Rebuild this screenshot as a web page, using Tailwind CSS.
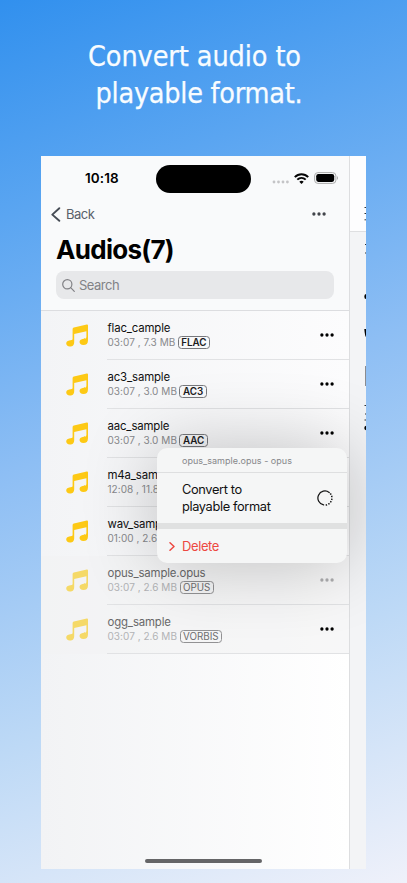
<!DOCTYPE html>
<html lang="en">
<head>
<meta charset="utf-8">
<meta name="viewport" content="width=device-width">
<title>Audios</title>
<script src="https://cdn.jsdelivr.net/npm/@tailwindcss/browser@4"></script>
</head>
<body class="h-[883px] w-[407px] overflow-hidden bg-[linear-gradient(160deg,#3190ee_0%,#5aa5f1_21%,#8dbef4_46%,#bdd9f6_73%,#eff1fa_100%)] font-['Inter',sans-serif]">
<svg class="hidden">
  <symbol id="note" viewBox="0 0 22 23"><path d="M6.6 5.3Q6.6 3.9 7.9 3.6L20.8.5Q22 .3 22 1.5V16.2C22 19.6 20.4 21 17.4 21C12.4 21 12.4 15.6 16.6 15C18.4 14.8 20.4 14.9 20.4 13V7.3L8.2 10V17.8C8.2 21.4 6.7 22.5 4 22.5C-.9 22.5-.9 17.1 3.2 16.5C5.2 16.2 6.6 16.4 6.6 14.8Z" fill="currentColor"/></symbol>
  <symbol id="dots" viewBox="0 0 14 4"><circle cx="1.9" cy="2" r="1.65"/><circle cx="7" cy="2" r="1.65"/><circle cx="12.1" cy="2" r="1.65"/></symbol>
</svg>
<h1 class="h-[156px] pt-[38px] text-center font-['DejaVu_Sans_Condensed','DejaVu_Sans',sans-serif] text-[28.5px] leading-[37px] font-normal tracking-[-0.1px] text-[#f8fcff] [-webkit-text-stroke:0.25px_#f8fcff]"><span class="block pr-[18px]">Convert audio to</span><span class="block pr-[9px] tracking-[-0.25px]">playable format.</span></h1>
<main class="relative ml-[41px] flex h-[713px] w-[325px] overflow-hidden bg-white">
  <section class="flex w-[308px] flex-col bg-linear-to-r from-[#f2f3f5] to-white">
    <header class="h-[154px] bg-[#f9fafb]">
      <div class="flex h-[45px] items-center">
        <span class="ml-[44px] w-[71px] text-[13.5px] font-semibold tracking-[0.1px] text-black">10:18</span>
        <span class="h-[28px] w-[95px] rounded-full bg-black"></span>
        <svg class="mt-[7px] ml-[21px] h-1 w-[17px]" viewBox="0 0 17 4" fill="#c4c4c6"><circle cx="2" cy="2" r="1.4"/><circle cx="6.5" cy="2" r="1.4"/><circle cx="11" cy="2" r="1.4"/><circle cx="15.4" cy="2" r="1.4"/></svg>
        <svg class="mb-px ml-[5px] h-[11px] w-[15px]" viewBox="0 0 15 11" fill="none" stroke="#050505" stroke-width="2"><path d="M.8 4.1C4.6.2 10.4.2 14.2 4.1M3.3 6.6C5.7 4.3 9.3 4.3 11.7 6.6"/><path d="M5.3 8.7Q7.5 7 9.7 8.7L7.5 11Z" fill="#050505" stroke="none"/></svg>
        <svg class="mb-px ml-[5px] h-[12px] w-[25px]" viewBox="0 0 25 12"><rect x=".6" y=".6" width="21.3" height="10.8" rx="3.3" fill="none" stroke="#aaa"/><rect x="2.2" y="2.1" width="18" height="7.8" rx="2.1"/><path d="M23 4Q25 6 23 8Z" fill="#aaa"/></svg>
      </div>
      <div class="flex h-[26px] items-center">
        <svg class="ml-[10px] h-[15px] w-[10px]" viewBox="0 0 10 15" fill="none" stroke="#464c55" stroke-width="1.9" stroke-linecap="round" stroke-linejoin="round"><path d="M8.3 1.2 1.3 7.6 8.3 13.8"/></svg>
        <span class="mt-px ml-[5px] text-[13px] tracking-[-0.5px] text-[#59606a]">Back</span>
        <svg class="mr-[23px] ml-auto h-1 w-[14px]" fill="#42454b"><use href="#dots"/></svg>
      </div>
      <h2 class="ml-[15px] h-[44px] pt-[6px] text-[26px] leading-[34px] font-bold tracking-[-0.7px] text-black">Audios(7)</h2>
      <div class="ml-[15px] flex h-[28px] w-[278px] items-center rounded-[8px] bg-[#e7e8ea] text-[13px] tracking-[-0.5px] text-[#818286]">
        <svg class="mr-1 ml-[6px] h-[13px] w-[13px]" viewBox="0 0 13 13" fill="none" stroke="#808185" stroke-width="1.2" stroke-linecap="round"><circle cx="5.3" cy="5.3" r="4.6"/><path d="m8.7 8.7 3.6 3.6"/></svg><span class="mt-px">Search</span>
      </div>
    </header>
    <ul id="rows" class="border-t border-[#dcdde0] bg-linear-to-r from-[#f3f4f6] to-[#fcfcfd]"></ul>
  </section>
  <aside class="relative w-[17px] border-l border-[#dddee0] bg-[#f3f4f6]">
    <div class="h-[76px] border-b border-[#dedfe1] bg-[#fdfdfe]"></div>
    <svg class="absolute top-0 right-0 h-[300px] w-[3px]" viewBox="0 0 3 300"><path d="M1.5 51.5h2M1.5 57.5h2M1.5 63.8h2M2 88.5h2M2 97h2M1.5 249.5h2M2 258h2M1.5 264h2" stroke="#2f3033"/><path d="M3 138Q1.3 138 1.3 140.5T3 143ZM1.3 173H3V181Q1.9 180 1.3 173ZM3 269.7Q1.3 270 1.3 272T3 274.3Z"/><path d="M2.5 210v20" stroke="#8b8c90"/></svg>
  </aside>
  <div class="absolute bottom-[6px] left-[104px] h-[4px] w-[117px] rounded-full bg-[#656567]"></div>
  <div class="absolute top-[292px] left-[116px] h-[115px] w-[190px] overflow-hidden rounded-[10px] bg-[#f5f6f6] shadow-[0_0_75px_rgba(0,0,0,0.24)]">
    <div class="h-[25px] border-b border-[#dedfe0] pl-[25px] text-[9px] leading-[26px] tracking-[0.02px] text-[#86878a]">opus_sample.opus - opus</div>
    <div class="flex h-[50px] items-center">
      <span class="ml-[25px] text-[12.8px] leading-[17px] tracking-[-0.36px] text-[#111]">Convert to<br>playable format</span>
      <svg class="mr-[14px] ml-auto h-4 w-4" viewBox="0 0 16 16" fill="none" stroke="#161616" stroke-width="1.25"><path d="M12.2 2.5A7 7 0 1 0 6.6 14.9" stroke-linecap="round"/><path d="M13.3 3.5A7 7 0 0 1 8 15" stroke-width="1.5" stroke-dasharray="1.4 1.3"/></svg>
    </div>
    <div class="h-[6px] bg-[#e0e1e1]"></div>
    <div class="flex h-[34px] items-center text-[13px] tracking-[-0.4px] text-[#ed4841]">
      <svg class="mr-[7px] ml-[12px] h-[9px] w-[6px]" viewBox="0 0 6 9" fill="none" stroke="currentColor" stroke-width="1.5" stroke-linecap="round" stroke-linejoin="round"><path d="m1 .8 4 3.7-4 3.7"/></svg><span class="mt-px">Delete</span>
    </div>
  </div>
</main>
<script>
const audios = [
  ['flac_cample', '03:07 , 7.3 MB', 'FLAC'],
  ['ac3_sample', '03:07 , 3.0 MB', 'AC3'],
  ['aac_sample', '03:07 , 3.0 MB', 'AAC'],
  ['m4a_sam', '12:08 , 11.8', ''],
  ['wav_samp', '01:00 , 2.6', ''],
  ['opus_sample.opus', '03:07 , 2.6 MB', 'OPUS', true, true],
  ['ogg_sample', '03:07 , 2.6 MB', 'VORBIS', true, false],
];
document.getElementById('rows').innerHTML = audios.map(([name, meta, format, faded, dim]) => `
  <li class="flex h-[49px] ${faded ? 'bg-[#f1f1f1]/45' : ''}">
    <svg class="mt-[13px] ml-[25px] h-[23px] w-[22px] shrink-0 ${faded ? 'text-[#f5d967]' : 'text-[#fdc915]'}"><use href="#note"/></svg>
    <div class="ml-[19px] flex flex-1 border-b border-[#e1e2e4]">
      <div class="pt-[10px] pl-[0.5px]">
        <div class="text-[11.4px] leading-[15px] tracking-[-0.15px] ${faded ? 'text-[#69696a]' : 'text-[#111]'}">${name}</div>
        <div class="flex h-[13px] items-center gap-[2.5px] text-[10px] tracking-[0.04px] whitespace-nowrap ${faded ? 'text-[#b2b3b5]' : 'text-[#88898c]'}">
          <span>${meta}</span>
          ${format ? `<span class="h-[13px] rounded-[3.5px] border px-[2.5px] text-[9.8px] leading-[12px] tracking-normal ${faded ? 'border-[#929294] font-normal text-[#6e6e70]' : 'border-[#77787c] font-semibold text-[#1c1c1e]'}">${format}</span>` : ''}
        </div>
      </div>
      <svg class="mt-[22px] mr-[15px] ml-auto h-1 w-[14px] ${dim ? 'fill-[#adadaf]' : 'fill-black'}"><use href="#dots"/></svg>
    </div>
  </li>`).join('');
</script>
</body>
</html>
